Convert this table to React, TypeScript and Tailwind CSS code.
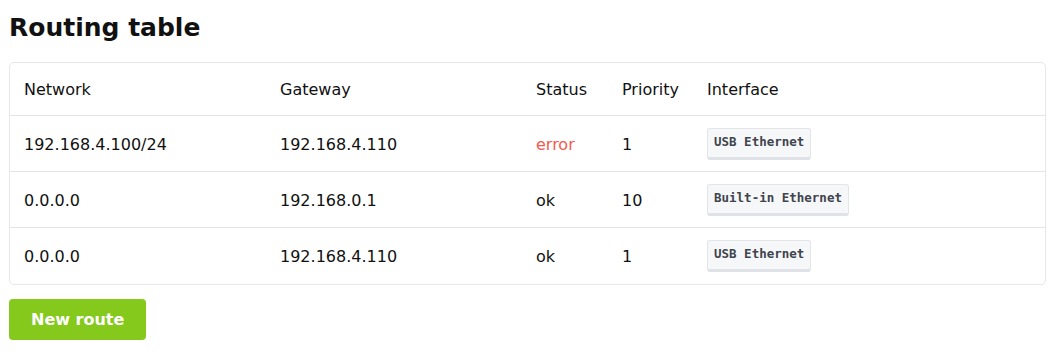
import React from "react";

type Route = {
  network: string;
  gateway: string;
  status: "ok" | "error";
  priority: number;
  iface: string;
};

const routes: Route[] = [
  { network: "192.168.4.100/24", gateway: "192.168.4.110", status: "error", priority: 1, iface: "USB Ethernet" },
  { network: "0.0.0.0", gateway: "192.168.0.1", status: "ok", priority: 10, iface: "Built-in Ethernet" },
  { network: "0.0.0.0", gateway: "192.168.4.110", status: "ok", priority: 1, iface: "USB Ethernet" },
];

function Badge({ children }: { children: React.ReactNode }) {
  return (
    <span className="inline-flex h-[32px] items-center rounded-[3px] border border-[#e3e5e9] border-b-[3px] border-b-[#dfe2e7] bg-[#f6f7f9] px-[6px] pb-[1px] font-['DejaVu_Sans_Mono',monospace] text-[12.5px] font-bold text-[#3f444d]">
      {children}
    </span>
  );
}

export default function App() {
  return (
    <div className="bg-white px-[9px] pt-[12px] font-['DejaVu_Sans',sans-serif] text-[#111111]">
      <h1 className="text-[25px] font-bold leading-[32px]">Routing table</h1>
      <div className="mt-[18px] overflow-hidden rounded-[5px] border border-[#e6e7ea] bg-white">
        <div className="flex h-[53px] items-center border-b border-[#e2e4e7] pt-[2px] text-[16px]">
          <div className="w-[256px] pl-[14px]">Network</div>
          <div className="w-[256px] pl-[14px]">Gateway</div>
          <div className="w-[86px] pl-[14px]">Status</div>
          <div className="w-[85px] pl-[14px]">Priority</div>
          <div className="pl-[14px]">Interface</div>
        </div>
        {routes.map((r, i) => (
          <div
            key={i}
            className={`flex h-[56px] items-center text-[16px] ${i < routes.length - 1 ? "border-b border-[#e2e4e7]" : ""}`}
          >
            <div className="w-[256px] pl-[14px] pt-[2px]">{r.network}</div>
            <div className="w-[256px] pl-[14px] pt-[2px]">{r.gateway}</div>
            <div className={`w-[86px] pl-[14px] pt-[2px] ${r.status === "error" ? "text-[#f25a4e]" : ""}`}>{r.status}</div>
            <div className="w-[85px] pl-[14px] pt-[2px]">{r.priority}</div>
            <div className="pl-[14px]">
              <Badge>{r.iface}</Badge>
            </div>
          </div>
        ))}
      </div>
      <button className="mt-[14px] h-[41px] rounded-[4px] bg-[#84c91c] px-[22px] text-[16px] font-bold text-white">
        New route
      </button>
    </div>
  );
}
